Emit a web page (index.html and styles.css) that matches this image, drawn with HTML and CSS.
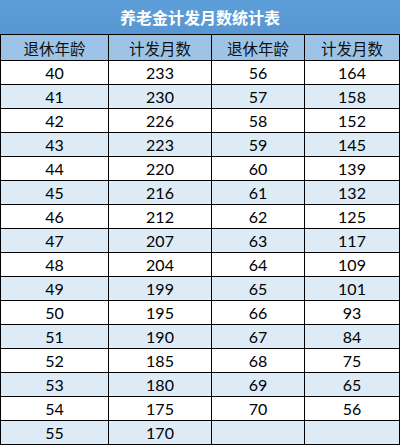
FILE: index.html
```html
<!DOCTYPE html>
<html lang="zh">
<head>
<meta charset="utf-8">
<link rel="stylesheet" href="styles.css">
</head>
<body>
<div class="sheet">
  <div class="title">养老金计发月数统计表</div>
  <div class="head">退休年龄</div><div class="head">计发月数</div><div class="head">退休年龄</div><div class="head">计发月数</div>
  <div class="c">40</div><div class="c">233</div><div class="c">56</div><div class="c">164</div>
  <div class="c b">41</div><div class="c b">230</div><div class="c b">57</div><div class="c b">158</div>
  <div class="c">42</div><div class="c">226</div><div class="c">58</div><div class="c">152</div>
  <div class="c b">43</div><div class="c b">223</div><div class="c b">59</div><div class="c b">145</div>
  <div class="c">44</div><div class="c">220</div><div class="c">60</div><div class="c">139</div>
  <div class="c b">45</div><div class="c b">216</div><div class="c b">61</div><div class="c b">132</div>
  <div class="c">46</div><div class="c">212</div><div class="c">62</div><div class="c">125</div>
  <div class="c b">47</div><div class="c b">207</div><div class="c b">63</div><div class="c b">117</div>
  <div class="c">48</div><div class="c">204</div><div class="c">64</div><div class="c">109</div>
  <div class="c b">49</div><div class="c b">199</div><div class="c b">65</div><div class="c b">101</div>
  <div class="c">50</div><div class="c">195</div><div class="c">66</div><div class="c">93</div>
  <div class="c b">51</div><div class="c b">190</div><div class="c b">67</div><div class="c b">84</div>
  <div class="c">52</div><div class="c">185</div><div class="c">68</div><div class="c">75</div>
  <div class="c b">53</div><div class="c b">180</div><div class="c b">69</div><div class="c b">65</div>
  <div class="c">54</div><div class="c">175</div><div class="c">70</div><div class="c">56</div>
  <div class="c b">55</div><div class="c b">170</div><div class="c b"></div><div class="c b"></div>
</div>
</body>
</html>
```

FILE: styles.css
```css
html, body {
  margin: 0;
  padding: 0;
  background: #fff;
}
.sheet {
  width: 400px;
  box-sizing: border-box;
  background: #000;
  padding: 0 1px 1px 1px;
  display: grid;
  grid-template-columns: 107px 102px 92px 94px;
  grid-template-rows: 34px 25px repeat(16, 23px);
  gap: 1px;
  font-family: "Lato", "Noto Sans CJK SC", sans-serif;
  color: #000;
}
.title {
  grid-column: 1 / -1;
  margin: 0 -1px;
  background: linear-gradient(#5d9fd8, #5897d2);
  color: #fff;
  font-family: "Noto Sans CJK SC", sans-serif;
  font-weight: bold;
  font-size: 16px;
  display: flex;
  align-items: center;
  justify-content: center;
}
.head {
  background: #9dc3e6;
  font-family: "Noto Sans CJK SC", sans-serif;
  font-size: 15.5px;
  color: #111;
  display: flex;
  align-items: center;
  justify-content: center;
}
.c {
  background: #fff;
  font-size: 16px;
  display: flex;
  align-items: center;
  justify-content: center;
}
.c.b {
  background: #ddebf7;
}
```
